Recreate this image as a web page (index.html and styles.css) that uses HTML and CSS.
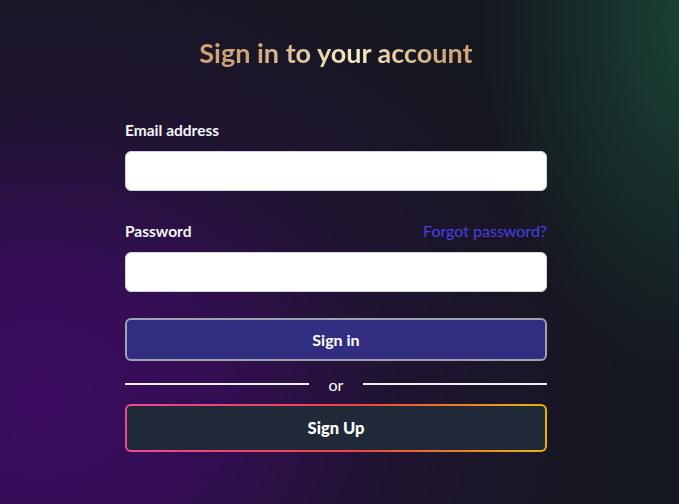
FILE: index.html
```html
<!DOCTYPE html>
<html>
<head>
<meta charset="utf-8">
<link rel="stylesheet" href="styles.css">
</head>
<body>
<main class="page">
  <div class="panel">
    <h1 class="title">Sign in to your account</h1>
    <form class="form">
      <div class="field field-email">
        <label class="label" for="email">Email address</label>
        <input class="input" id="email" type="email">
      </div>
      <div class="field field-password">
        <div class="label-row">
          <label class="label" for="password">Password</label>
          <a class="forgot" href="#">Forgot password?</a>
        </div>
        <input class="input" id="password" type="password">
      </div>
      <button class="btn-signin" type="button">Sign in</button>
      <div class="divider"><span class="line"></span><span class="or">or</span><span class="line"></span></div>
      <div class="signup-wrap"><button class="btn-signup" type="button">Sign Up</button></div>
    </form>
  </div>
</main>
</body>
</html>
```
FILE: styles.css
```css
html, body { margin: 0; height: 100%; }
body {
  font-family: "Lato", "Noto Sans", sans-serif;
  background-color: #15171f;
  background-image:
    radial-gradient(ellipse 580px 470px at 40px 400px, rgba(60, 12, 96, 1) 0%, rgba(55, 13, 90, 0.9) 30%, rgba(40, 17, 64, 0.55) 60%, rgba(21, 23, 31, 0) 100%),
    radial-gradient(ellipse 220px 360px at 700px 20px, rgba(25, 68, 54, 1) 0%, rgba(21, 23, 31, 0) 100%);
  color: #fff;
}
.page {
  height: 504px;
  display: flex;
  justify-content: center;
  padding-right: 7px;
}
.panel {
  width: 422px;
  padding-top: 37px;
}
.title {
  margin: 0;
  text-align: center;
  font-size: 27px;
  line-height: 32px;
  font-weight: 700;
  background: linear-gradient(90deg, #c89a73 0%, #d0a57c 30%, #f6ecc4 55%, #d3a67e 75%, #c89870 100%);
  -webkit-background-clip: text;
  background-clip: text;
  color: transparent;
}
.form {
  margin-top: 50px;
  display: flex;
  flex-direction: column;
}
.field { display: flex; flex-direction: column; gap: 10px; }
.field-email { margin-bottom: 29px; }
.field-password { margin-bottom: 26px; }
.label-row { display: flex; justify-content: space-between; align-items: center; }
.label { font-size: 15.5px; font-weight: 700; line-height: 22px; color: #f3f4f6; }
.forgot { font-size: 16px; font-weight: 400; line-height: 22px; text-decoration: none; color: #4a3ee6; }
.input {
  box-sizing: border-box;
  height: 40px;
  width: 100%;
  border: 1px solid #d1d5db;
  border-radius: 6px;
  background: #fff;
  margin: 0;
}
.btn-signin {
  box-sizing: border-box;
  height: 43px;
  width: 100%;
  margin: 0;
  border: 2px solid #9ca3af;
  border-radius: 6px;
  background: #332d82;
  color: #fff;
  font-family: inherit;
  font-size: 16px;
  font-weight: 700;
}
.divider {
  display: flex;
  align-items: center;
  height: 20px;
  margin: 13px 0 10px;
}
.line { flex: 1; height: 2px; background: #f1f0f5; }
.or { width: 54px; text-align: center; font-size: 16px; line-height: 20px; padding-top: 2px; color: #fff; }
.signup-wrap {
  padding: 2px;
  border-radius: 6px;
  background: linear-gradient(90deg, #ec4899, #ef4444 55%, #eab308);
}
.btn-signup {
  display: block;
  box-sizing: border-box;
  width: 100%;
  height: 44px;
  border: 0;
  border-radius: 4px;
  background: #1f2937;
  color: #fff;
  font-family: inherit;
  font-size: 16.5px;
  font-weight: 900;
}
```
